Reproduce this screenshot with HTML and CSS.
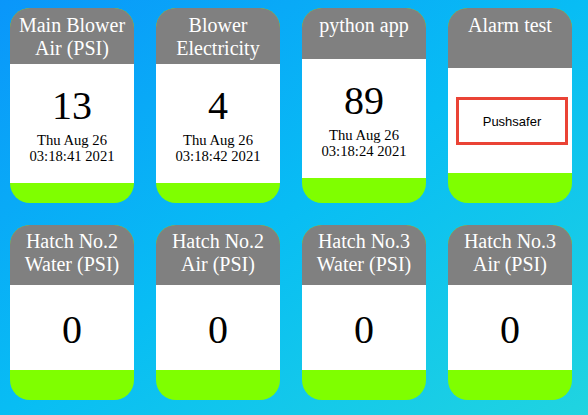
FILE: index.html
```html
<!DOCTYPE html>
<html lang="en">
<head>
<meta charset="utf-8">
<title>Dashboard</title>
<link rel="stylesheet" href="styles.css">
</head>
<body>
<main class="grid">
  <section class="card card-top">
    <header class="card-head head-2">Main Blower Air (PSI)</header>
    <div class="card-body body-tall">
      <div class="value">13</div>
      <div class="stamp">Thu Aug 26 03:18:41 2021</div>
    </div>
  </section>
  <section class="card card-top">
    <header class="card-head head-2">Blower Electricity</header>
    <div class="card-body body-tall">
      <div class="value">4</div>
      <div class="stamp">Thu Aug 26 03:18:42 2021</div>
    </div>
  </section>
  <section class="card card-top">
    <header class="card-head head-1">python app</header>
    <div class="card-body body-tall">
      <div class="value">89</div>
      <div class="stamp">Thu Aug 26 03:18:24 2021</div>
    </div>
  </section>
  <section class="card card-top">
    <header class="card-head head-alarm">Alarm test</header>
    <div class="card-body body-alarm">
      <button class="push" type="button">Pushsafer</button>
    </div>
  </section>

  <section class="card card-bottom">
    <header class="card-head head-low">Hatch No.2 Water (PSI)</header>
    <div class="card-body body-low"><div class="value">0</div></div>
  </section>
  <section class="card card-bottom">
    <header class="card-head head-low">Hatch No.2 Air (PSI)</header>
    <div class="card-body body-low"><div class="value">0</div></div>
  </section>
  <section class="card card-bottom">
    <header class="card-head head-low">Hatch No.3 Water (PSI)</header>
    <div class="card-body body-low"><div class="value">0</div></div>
  </section>
  <section class="card card-bottom">
    <header class="card-head head-low">Hatch No.3 Air (PSI)</header>
    <div class="card-body body-low"><div class="value">0</div></div>
  </section>
</main>
</body>
</html>
```
FILE: styles.css
```css
html {
  height: 100%;
  background: linear-gradient(to bottom right, #0a96fa 0%, #08bdf4 50%, #20d4e0 100%);
}

body {
  margin: 0;
  min-height: 100%;
  font-family: "Liberation Serif", "Times New Roman", serif;
}

.grid {
  display: grid;
  grid-template-columns: repeat(4, 124px);
  column-gap: 22px;
  row-gap: 22px;
  padding: 8px 0 0 10px;
}

.card {
  display: flex;
  flex-direction: column;
  border-radius: 20px;
  overflow: hidden;
  background: #7fff00;
}

.card-top { height: 195px; }
.card-bottom { height: 175px; }

.card-head {
  box-sizing: border-box;
  background: #808080;
  color: #fff;
  font-size: 20px;
  line-height: 23px;
  text-align: center;
  padding: 6px 2px 0;
}

.head-2 { height: 56px; }
.head-1 { height: 51px; }
.head-alarm { height: 60px; }
.head-low { height: 60px; padding-top: 5px; }

.card-body {
  background: #fff;
  display: flex;
  flex-direction: column;
  align-items: center;
  justify-content: center;
  color: #000;
}

.body-tall { height: 119px; }
.body-alarm { height: 105px; align-items: flex-start; padding: 1px 0 0 8px; box-sizing: border-box; }
.body-low { height: 85px; padding-top: 5px; box-sizing: border-box; }

.value {
  font-size: 40px;
  line-height: 46px;
}

.stamp {
  font-size: 14.67px;
  line-height: 16px;
  text-align: center;
  margin-top: 3px;
  padding: 0 10px;
}

.push {
  box-sizing: border-box;
  width: 112px;
  height: 48px;
  border: 3px solid #ea4335;
  background: #fff;
  font-family: "Liberation Sans", Arial, sans-serif;
  font-size: 13px;
  color: #000;
  padding: 0;
}
```
